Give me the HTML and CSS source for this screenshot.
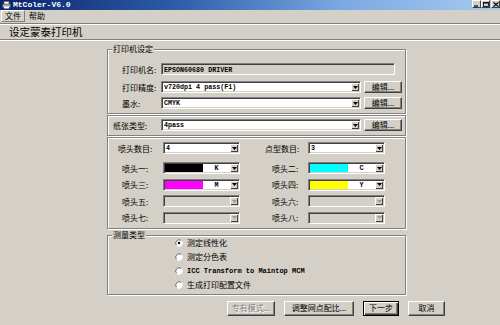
FILE: index.html
```html
<!DOCTYPE html>
<html lang="zh-CN">
<head>
<meta charset="utf-8">
<title>MtColer-V6.0</title>
<link rel="stylesheet" href="styles.css">
</head>
<body>
<div class="titlebar">
  <svg class="app-icon" width="9" height="8" viewBox="0 0 9 8"><rect x="2" y="0.5" width="5" height="3" fill="#fff" stroke="#555" stroke-width="0.6"/><rect x="0.5" y="3" width="8" height="3.5" fill="#a8a8a8" stroke="#404040" stroke-width="0.6"/><rect x="2" y="5.5" width="5" height="2" fill="#fff"/></svg>
  <span class="title">MtColer-V6.0</span>
  <div class="caption">
    <span class="cap-btn"><svg width="5" height="5" viewBox="0 0 5 5"><rect x="0" y="3.5" width="4" height="1.2" fill="#000"/></svg></span>
    <span class="cap-btn"><svg width="6" height="5" viewBox="0 0 6 5"><rect x="0.5" y="0.5" width="5" height="4" fill="none" stroke="#000" stroke-width="0.8"/><rect x="0.5" y="0.5" width="5" height="1" fill="#000"/></svg></span>
    <span class="cap-btn close"><svg width="6" height="5" viewBox="0 0 6 5"><path d="M0.5 0.3 L5.5 4.7 M5.5 0.3 L0.5 4.7" stroke="#000" stroke-width="1.1"/></svg></span>
  </div>
</div>
<div class="menubar">
  <span class="menu-item active">文件</span>
  <span class="menu-item">帮助</span>
</div>
<div class="header">设定蒙泰打印机</div>

<div class="group g-printer">
  <div class="group-title">打印机设定</div>
  <div class="row r1">
    <span class="label">打印机名:</span>
    <div class="field"><span class="mono">EPSON60680 DRIVER</span></div>
  </div>
  <div class="row r2">
    <span class="label">打印精度:</span>
    <div class="combo wide"><span class="combo-text mono">v720dpi 4 pass(F1)</span><span class="arrow"><svg width="5" height="3" viewBox="0 0 5 3"><path d="M0 0 H5 L2.5 3 Z" fill="#000"/></svg></span></div>
    <button class="btn edit">编辑...</button>
  </div>
  <div class="row r3">
    <span class="label">墨水:</span>
    <div class="combo wide"><span class="combo-text mono">CMYK</span><span class="arrow"><svg width="5" height="3" viewBox="0 0 5 3"><path d="M0 0 H5 L2.5 3 Z" fill="#000"/></svg></span></div>
    <button class="btn edit">编辑...</button>
  </div>
</div>

<div class="group g-paper">
  <div class="row">
    <span class="label paper-label">纸张类型:</span>
    <div class="combo wide"><span class="combo-text mono">4pass</span><span class="arrow"><svg width="5" height="3" viewBox="0 0 5 3"><path d="M0 0 H5 L2.5 3 Z" fill="#000"/></svg></span></div>
    <button class="btn edit">编辑...</button>
  </div>
</div>

<div class="group g-nozzle">
  <div class="nrow">
    <span class="nl wide">喷头数目:</span>
    <div class="combo small"><span class="combo-text mono">4</span><span class="arrow"><svg width="5" height="3" viewBox="0 0 5 3"><path d="M0 0 H5 L2.5 3 Z" fill="#000"/></svg></span></div>
    <span class="nr wide">点型数目:</span>
    <div class="combo small"><span class="combo-text mono">3</span><span class="arrow"><svg width="5" height="3" viewBox="0 0 5 3"><path d="M0 0 H5 L2.5 3 Z" fill="#000"/></svg></span></div>
  </div>
  <div class="nozzle-rows">
    <div class="nrow">
      <span class="nl">喷头一:</span>
      <div class="combo small"><span class="swatch k"></span><span class="letter mono">K</span><span class="arrow"><svg width="5" height="3" viewBox="0 0 5 3"><path d="M0 0 H5 L2.5 3 Z" fill="#000"/></svg></span></div>
      <span class="nr">喷头二:</span>
      <div class="combo small"><span class="swatch c"></span><span class="letter mono">C</span><span class="arrow"><svg width="5" height="3" viewBox="0 0 5 3"><path d="M0 0 H5 L2.5 3 Z" fill="#000"/></svg></span></div>
    </div>
    <div class="nrow">
      <span class="nl">喷头三:</span>
      <div class="combo small"><span class="swatch m"></span><span class="letter mono">M</span><span class="arrow"><svg width="5" height="3" viewBox="0 0 5 3"><path d="M0 0 H5 L2.5 3 Z" fill="#000"/></svg></span></div>
      <span class="nr">喷头四:</span>
      <div class="combo small"><span class="swatch y"></span><span class="letter mono">Y</span><span class="arrow"><svg width="5" height="3" viewBox="0 0 5 3"><path d="M0 0 H5 L2.5 3 Z" fill="#000"/></svg></span></div>
    </div>
    <div class="nrow">
      <span class="nl">喷头五:</span>
      <div class="combo small disabled"><span class="combo-text"></span><span class="arrow"><svg width="5" height="3" viewBox="0 0 5 3"><path d="M0 0 H5 L2.5 3 Z" fill="#9a9a9a"/></svg></span></div>
      <span class="nr">喷头六:</span>
      <div class="combo small disabled"><span class="combo-text"></span><span class="arrow"><svg width="5" height="3" viewBox="0 0 5 3"><path d="M0 0 H5 L2.5 3 Z" fill="#9a9a9a"/></svg></span></div>
    </div>
    <div class="nrow">
      <span class="nl">喷头七:</span>
      <div class="combo small disabled"><span class="combo-text"></span><span class="arrow"><svg width="5" height="3" viewBox="0 0 5 3"><path d="M0 0 H5 L2.5 3 Z" fill="#9a9a9a"/></svg></span></div>
      <span class="nr">喷头八:</span>
      <div class="combo small disabled"><span class="combo-text"></span><span class="arrow"><svg width="5" height="3" viewBox="0 0 5 3"><path d="M0 0 H5 L2.5 3 Z" fill="#9a9a9a"/></svg></span></div>
    </div>
  </div>
</div>

<div class="group g-measure">
  <div class="group-title measure-title">测量类型</div>
  <div class="radios">
    <div class="radio-row"><svg class="radio" width="8" height="8" viewBox="0 0 8 8"><circle cx="4" cy="4" r="3.4" fill="#fff"/><path d="M1.6 6.4 A3.4 3.4 0 0 1 6.4 1.6" fill="none" stroke="#666" stroke-width="1"/><path d="M6.4 1.6 A3.4 3.4 0 0 1 1.6 6.4" fill="none" stroke="#fff" stroke-width="1"/><circle cx="4" cy="4" r="1.2" fill="#000"/></svg><span>测定线性化</span></div>
    <div class="radio-row"><svg class="radio" width="8" height="8" viewBox="0 0 8 8"><circle cx="4" cy="4" r="3.4" fill="#fff"/><path d="M1.6 6.4 A3.4 3.4 0 0 1 6.4 1.6" fill="none" stroke="#666" stroke-width="1"/><path d="M6.4 1.6 A3.4 3.4 0 0 1 1.6 6.4" fill="none" stroke="#fff" stroke-width="1"/></svg><span>测定分色表</span></div>
    <div class="radio-row"><svg class="radio" width="8" height="8" viewBox="0 0 8 8"><circle cx="4" cy="4" r="3.4" fill="#fff"/><path d="M1.6 6.4 A3.4 3.4 0 0 1 6.4 1.6" fill="none" stroke="#666" stroke-width="1"/><path d="M6.4 1.6 A3.4 3.4 0 0 1 1.6 6.4" fill="none" stroke="#fff" stroke-width="1"/></svg><span class="mono radio-mono">ICC Transform to Maintop MCM</span></div>
    <div class="radio-row"><svg class="radio" width="8" height="8" viewBox="0 0 8 8"><circle cx="4" cy="4" r="3.4" fill="#fff"/><path d="M1.6 6.4 A3.4 3.4 0 0 1 6.4 1.6" fill="none" stroke="#666" stroke-width="1"/><path d="M6.4 1.6 A3.4 3.4 0 0 1 1.6 6.4" fill="none" stroke="#fff" stroke-width="1"/></svg><span>生成打印配置文件</span></div>
  </div>
</div>

<div class="actions">
  <button class="btn disabled b1">专有模式...</button>
  <button class="btn b2">调整网点配比...</button>
  <button class="btn default b3">下一步</button>
  <button class="btn b4">取消</button>
</div>
</body>
</html>
```

FILE: styles.css
```css
* { box-sizing: border-box; }
html, body { margin: 0; padding: 0; }
body {
  width: 500px;
  height: 325px;
  overflow: hidden;
  background: #d4d0c8;
  font-family: "Noto Sans CJK SC", "Noto Sans", sans-serif;
  font-size: 8px;
  color: #000;
}
.mono {
  font-family: "Liberation Mono", "DejaVu Sans Mono", monospace;
  font-weight: bold;
  font-size: 6.7px;
}

/* title bar */
.titlebar {
  height: 10px;
  display: flex;
  align-items: flex-start;
  background: linear-gradient(to right, #0a246a 0%, #2d5ca8 35%, #7aa8e2 68%, #a6caf0 100%);
}
.app-icon { margin: 1px 0 0 2px; flex: none; }
.title {
  margin-left: 2px;
  color: #fff;
  font-family: "Liberation Mono", monospace;
  font-weight: bold;
  font-size: 8px;
  line-height: 9px;
}
.caption { margin-left: auto; display: flex; }
.cap-btn {
  width: 9px;
  height: 8px;
  background: #d4d0c8;
  border: 1px solid;
  border-color: #fff #404040 #404040 #fff;
  display: flex;
  align-items: center;
  justify-content: center;
}
.cap-btn.close { margin-left: 1px; }

/* menu */
.menubar { height: 12px; display: flex; padding-left: 1px; }
.menu-item {
  padding: 0 3px;
  line-height: 10px;
  border: 1px solid transparent;
}
.menu-item.active { border-color: #fff #808080 #808080 #fff; }

/* header */
.header {
  margin-top: 1px;
  height: 17px;
  border-top: 1px solid #808080;
  border-bottom: 1px solid #808080;
  box-shadow: inset 0 1px 0 #fff, 0 1px 0 #fff;
  padding-left: 9px;
  font-size: 10.5px;
  line-height: 15px;
}

/* group boxes */
.group {
  margin-left: 107px;
  width: 299px;
  border: 1px solid #808080;
  box-shadow: inset 1px 1px 0 #fff, 1px 1px 0 #fff;
}
.group-title {
  width: fit-content;
  margin: -6px 0 0 4px;
  padding: 0 1px;
  background: #d4d0c8;
  line-height: 10px;
}
.g-printer { margin-top: 9px; padding-bottom: 4px; }
.row { display: flex; align-items: center; height: 12px; padding-left: 14px; }
.r1 { margin-top: 9px; }
.r2 { margin-top: 6px; }
.r3 { margin-top: 4px; }
.label { width: 39px; flex: none; white-space: nowrap; }

.g-paper { margin-top: 1px; padding: 3px 0 4px 0; }
.g-paper .row { padding-left: 5px; }
.paper-label { width: 48px; }

/* sunken fields */
.field, .combo {
  height: 12px;
  border: 1px solid;
  border-color: #808080 #fff #fff #808080;
  box-shadow: inset 1px 1px 0 #404040, inset -1px -1px 0 #d4d0c8;
}
.field {
  width: 234px;
  background: #d4d0c8;
  padding: 0 2px;
  line-height: 10px;
}
.combo {
  display: flex;
  background: #fff;
  padding: 1px;
  flex: none;
}
.combo.wide { width: 200px; }
.combo.small { width: 77px; }
.combo.disabled { background: #d4d0c8; }
.combo-text { flex: 1; line-height: 8px; padding-left: 1px; white-space: nowrap; overflow: hidden; }
.arrow {
  width: 8px;
  height: 8px;
  flex: none;
  background: #d4d0c8;
  box-shadow: inset 1px 1px 0 #fff, inset -1px -1px 0 #404040;
  display: flex;
  align-items: center;
  justify-content: center;
}
.swatch { width: 38px; height: 8px; flex: none; }
.swatch.k { background: #000; }
.swatch.m { background: #ff00ff; }
.swatch.c { background: #00ffff; }
.swatch.y { background: #ffff00; }
.letter { flex: 1; text-align: center; line-height: 8px; }

/* buttons */
.btn {
  height: 12px;
  padding: 0;
  margin: 0;
  background: #d4d0c8;
  border: 1px solid;
  border-color: #fff #404040 #404040 #fff;
  box-shadow: inset -1px -1px 0 #808080;
  font-family: "Noto Sans CJK SC", sans-serif;
  font-size: 8px;
  color: #000;
  display: flex;
  align-items: center;
  justify-content: center;
  line-height: 10px;
  flex: none;
}
.btn.edit { width: 38px; margin-left: 3px; }

/* nozzles */
.g-nozzle { margin-top: 1px; padding: 4px 0 4px 0; }
.nrow { display: flex; align-items: center; height: 12px; }
.nozzle-rows { display: flex; flex-direction: column; gap: 4.5px; margin-top: 8px; }
.nl { width: 55px; padding-left: 14px; flex: none; white-space: nowrap; }
.nl.wide { padding-left: 10px; }
.nr { width: 68px; padding-left: 32px; flex: none; white-space: nowrap; }
.nr.wide { padding-left: 25px; }

/* measure */
.g-measure { margin-top: 6px; padding-bottom: 2px; }
.measure-title { margin-bottom: -4px; }
.radios { padding-left: 67px; }
.radio-row { display: flex; align-items: center; gap: 4px; height: 14px; }
.radio { flex: none; }
.radio-mono { font-size: 7px; }

/* bottom actions */
.actions {
  display: flex;
  justify-content: flex-end;
  gap: 9px;
  padding-right: 55px;
  margin-top: 6px;
}
.actions .btn { height: 15px; }
.b1 { width: 48px; }
.b2 { width: 70px; }
.b3 { width: 36px; }
.b4 { width: 37px; }
.btn.disabled { color: #808080; text-shadow: 1px 1px 0 #fff; }
.btn.default {
  border: 1px solid #000;
  box-shadow: inset 1px 1px 0 #fff, inset -1px -1px 0 #404040, inset -2px -2px 0 #808080;
}
```
